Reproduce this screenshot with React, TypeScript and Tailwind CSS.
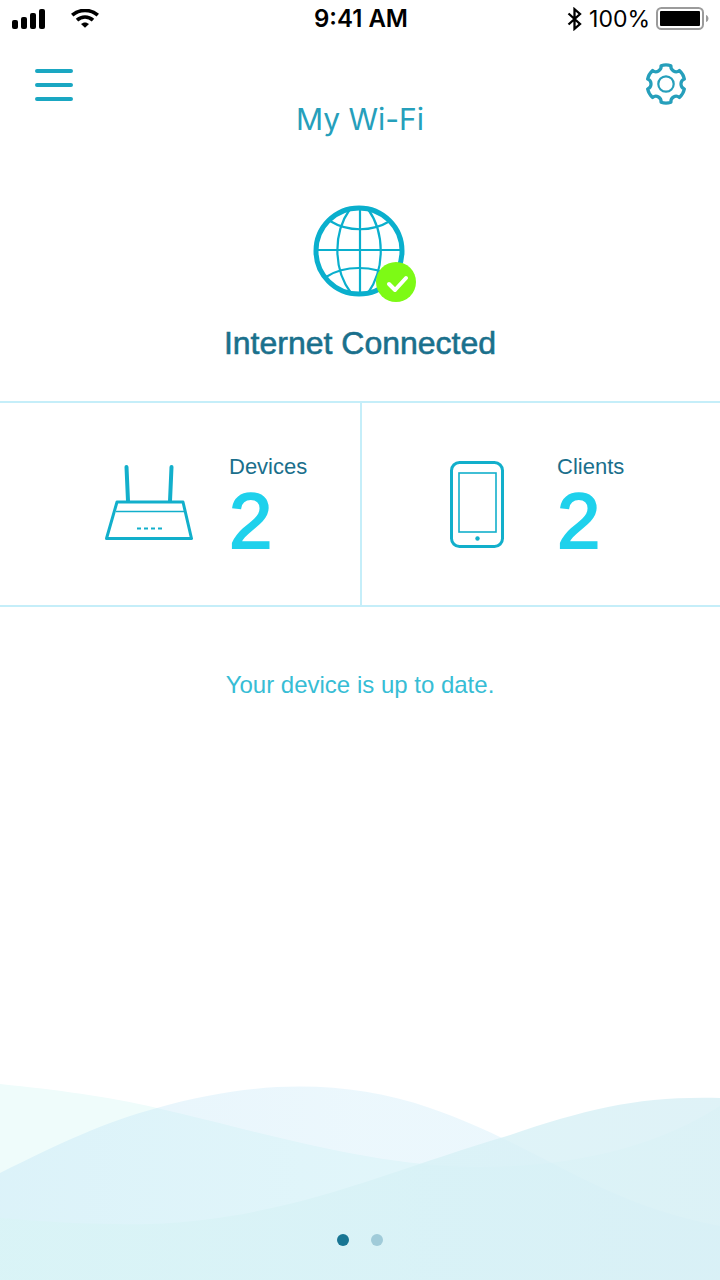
import { useState } from 'react';

const pages = ['Network overview', 'More tools'];

function SignalIcon() {
  return (
    <svg width="34" height="20" viewBox="0 0 34 20" aria-hidden="true">
      <rect x="0" y="11" width="6" height="9" rx="2" />
      <rect x="9" y="8" width="6" height="12" rx="2" />
      <rect x="18" y="4" width="6" height="16" rx="2" />
      <rect x="27" y="0" width="6" height="20" rx="2" />
    </svg>
  );
}

function WifiIcon() {
  return (
    <svg width="30" height="20" viewBox="-1 1 30 20" fill="none" stroke="#000" strokeWidth="3.6" aria-hidden="true">
      <path d="M1.2 7.2C8.4 .8 19.6 .8 26.8 7.2" />
      <path d="M6 12.2C10.6 8 17.4 8 22 12.2" />
      <path d="M10 16C12.4 13.9 15.6 13.9 18 16L14 19.8Z" fill="#000" stroke="none" />
    </svg>
  );
}

function BluetoothIcon() {
  return (
    <svg width="16" height="24" viewBox="0 0 16 24" fill="none" stroke="#000" strokeWidth="2.3" aria-hidden="true">
      <path d="M1.5 6.5L13 17L7.5 21.8V2.2L13 7L1.5 17.5" />
    </svg>
  );
}

function BatteryIcon() {
  return (
    <svg width="54" height="24" viewBox="0 0 54 24" aria-hidden="true">
      <rect x="1" y="1" width="46" height="21" rx="4.5" fill="none" stroke="#9b9b9b" strokeWidth="2" />
      <rect x="4" y="4" width="40" height="15" rx="1" />
      <path d="M50 8C53.3 9 53.3 14 50 15Z" fill="#9b9b9b" />
    </svg>
  );
}

function GearIcon() {
  return (
    <svg width="44" height="44" viewBox="-22 -22 44 44" fill="none" stroke="#269fbb" strokeLinejoin="round" aria-hidden="true">
      <path
        strokeWidth="3.2"
        d="M-4.97-18.3A16 16 0 0 1 4.97-18.3A5.2 5.2 0 0 0 13.4-13.5A16 16 0 0 1 18.4-4.9A5.2 5.2 0 0 0 18.4 4.9A16 16 0 0 1 13.4 13.5A5.2 5.2 0 0 0 4.97 18.3A16 16 0 0 1-4.97 18.3A5.2 5.2 0 0 0-13.4 13.5A16 16 0 0 1-18.4 4.9A5.2 5.2 0 0 0-18.4-4.9A16 16 0 0 1-13.4-13.5A5.2 5.2 0 0 0-4.97-18.3Z"
      />
      <circle r="7.7" strokeWidth="2.2" />
    </svg>
  );
}

function GlobeIcon() {
  return (
    <svg width="116" height="100" viewBox="0 0 116 100" fill="none" stroke="#0aafcd" strokeWidth="2.2" aria-hidden="true">
      <circle cx="57" cy="47" r="43" strokeWidth="5" />
      <path d="M58 4V90M14 46H100" />
      <path d="M48 5C31 29 31 65 49 89M66 5C83 29 83 65 66 89" />
      <path d="M28 17C46 28 70 28 88 17M24 73C42 61 72 61 90 73" />
      <circle cx="94" cy="78" r="20" fill="#7dfa15" stroke="none" />
      <path d="M87 80L93 86L104 74" stroke="#fff" strokeWidth="4" strokeLinecap="round" strokeLinejoin="round" />
    </svg>
  );
}

function RouterIcon() {
  return (
    <svg width="90" height="88" viewBox="0 0 90 88" fill="none" stroke="#12afcb" aria-hidden="true">
      <path d="M22.5 7L24 41M67.5 7L66 41" strokeWidth="4" strokeLinecap="round" />
      <path d="M13 42H79L87.5 78.5H2.5Z" strokeWidth="3" strokeLinejoin="round" />
      <path d="M12 51.5H80" strokeWidth="1.3" />
      <path d="M33 68.5H58" strokeWidth="1.8" strokeDasharray="4 3" />
    </svg>
  );
}

function PhoneIcon() {
  return (
    <svg width="90" height="88" viewBox="0 0 90 88" fill="none" stroke="#12afcb" aria-hidden="true">
      <rect x="19.5" y="2.5" width="51" height="84" rx="8" strokeWidth="3" />
      <rect x="27" y="13" width="37" height="59" strokeWidth="1.6" />
      <circle cx="45.5" cy="78.5" r="2.2" fill="#12afcb" stroke="none" />
    </svg>
  );
}

function Waves() {
  return (
    <svg className="col-start-1 row-start-1 w-full h-50" viewBox="0 0 720 200" preserveAspectRatio="none" aria-hidden="true">
      <defs>
        <linearGradient id="middle" x1="0" x2="1">
          <stop offset="0" stopColor="#b5dff5" />
          <stop offset="0.5" stopColor="#c4e8f8" />
        </linearGradient>
        <linearGradient id="front" x1="0" x2="1">
          <stop offset="0" stopColor="#d9f4f6" />
          <stop offset="0.6" stopColor="#d7f1f6" />
          <stop offset="1" stopColor="#d7eff5" />
        </linearGradient>
      </defs>
      <path d="M0 4C58 10 105 16 157 28C250 49 370 87 480 87C570 87 655 68 720 26V200H0Z" fill="#effcfb" />
      <path d="M0 93C62 62 105 42 157 28C255 0 345-1 430 28C545 68 595 122 720 146V200H0Z" fill="url(#middle)" fillOpacity="0.33" />
      <path d="M0 138C50 142 95 145 150 144C290 139 390 90 507 56C590 28 640 16 720 18V200H0Z" fill="url(#front)" fillOpacity="0.8" />
    </svg>
  );
}

export default function App() {
  const [page, setPage] = useState(0);

  return (
    <div className="min-h-screen flex flex-col bg-white font-['Liberation_Sans',Arial,sans-serif]">
      {/* Status bar */}
      <div className="grid grid-cols-3 items-center h-[38px] pl-3 pr-2.5 font-[Inter,sans-serif] text-2xl text-black">
        <div className="flex items-center gap-6">
          <SignalIcon />
          <WifiIcon />
        </div>
        <div className="text-center font-semibold">9:41 AM</div>
        <div className="flex items-center justify-end gap-1.5">
          <BluetoothIcon />
          <span className="text-[23px]">100%</span>
          <BatteryIcon />
        </div>
      </div>

      {/* Header */}
      <header className="flex items-start justify-between px-8 pt-6">
        <button type="button" aria-label="Menu" className="w-11 h-11 flex items-center justify-center">
          <svg width="38" height="34" viewBox="0 0 38 34" stroke="#1aa7c2" strokeWidth="4" strokeLinecap="round" aria-hidden="true">
            <path d="M2 4H36M2 18H36M2 32H36" />
          </svg>
        </button>
        <h1 className="pt-9 font-[Inter,sans-serif] text-[30px] leading-[42px] font-normal text-[#269fbb]">My Wi-Fi</h1>
        <button type="button" aria-label="Settings" className="w-11 h-11">
          <GearIcon />
        </button>
      </header>

      <main className="flex-1">
        {/* Connection status */}
        <section className="flex flex-col items-center pt-16 pb-[39px]">
          <GlobeIcon />
          <h2 className="pt-5 text-[32px] leading-[38px] text-[#1a708c] [-webkit-text-stroke:0.6px_#1a708c]">Internet Connected</h2>
        </section>

        {/* Counters */}
        <section className="grid grid-cols-2 border-y-2 border-[#c5eef9]">
          <a href="#devices" className="flex items-center gap-[35px] h-[202px] pl-[104px] text-[#1a6f8c]">
            <RouterIcon />
            <div className="pt-2.5">
              <div className="text-[22px] leading-6">Devices</div>
              <div className="text-[78px] leading-[84px] text-[#1fd1ec] [-webkit-text-stroke:2px_#1fd1ec]">2</div>
            </div>
          </a>
          <a href="#clients" className="flex items-center gap-[35px] h-[202px] pl-[70px] border-l-2 border-[#c5eef9] text-[#1a6f8c]">
            <PhoneIcon />
            <div className="pt-2.5">
              <div className="text-[22px] leading-6">Clients</div>
              <div className="text-[78px] leading-[84px] text-[#1fd1ec] [-webkit-text-stroke:2px_#1fd1ec]">2</div>
            </div>
          </a>
        </section>

        <p className="pt-16 text-center text-2xl leading-7 text-[#37bdd5]">Your device is up to date.</p>
      </main>

      {/* Waves with the page dots on top */}
      <footer className="grid">
        <Waves />
        <div className="col-start-1 row-start-1 self-end flex justify-center gap-[22px] pb-[34px]">
          {pages.map((label, i) => (
            <button
              key={label}
              type="button"
              aria-label={label}
              onClick={() => setPage(i)}
              className={`w-3 h-3 rounded-full ${i === page ? 'bg-[#187593]' : 'bg-[#a0cbd9]'}`}
            />
          ))}
        </div>
      </footer>
    </div>
  );
}
